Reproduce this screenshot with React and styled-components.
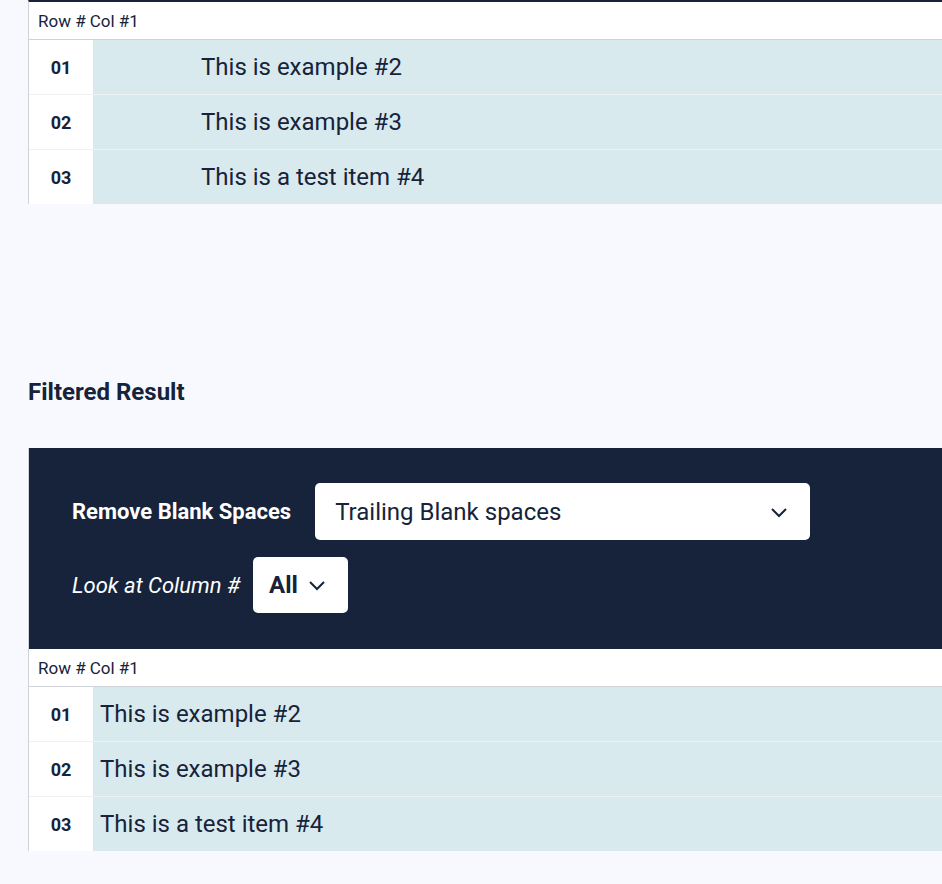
import styled, { createGlobalStyle } from "styled-components";

const Global = createGlobalStyle`
  body { margin: 0; background: #f7f9fe; font-family: Roboto, "Liberation Sans", sans-serif; color: #16233a; overflow: hidden; }
`;

const Page = styled.div`
  padding-left: 28px;
  width: 930px;
`;

const Table = styled.div`
  border-left: 1px solid #cfd3d8;
  border-top: ${(p) => (p.topBorder ? "2px solid #16233a" : "none")};
`;

const Header = styled.div`
  height: 37px;
  background: #fff;
  border-bottom: 1px solid #cfd3d8;
  display: flex;
  align-items: center;
  padding-left: 9px;
  font-size: 17px;
  gap: 4px;
`;

const Row = styled.div`
  display: flex;
  height: 54px;
  & + & { border-top: 1px solid #eef1f3; }
`;

const Num = styled.div`
  width: 64px;
  background: #fff;
  display: flex;
  align-items: center;
  justify-content: center;
  font-weight: 700;
  font-size: 18px;
`;

const Cell = styled.div`
  flex: 1;
  background: #d9eaee;
  display: flex;
  align-items: center;
  padding-left: ${(p) => p.indent}px;
  font-size: 24px;
`;

const Title = styled.h2`
  margin: 174px 0 42px;
  font-size: 24px;
  font-weight: 700;
`;

const Panel = styled.div`
  background: #16233a;
  padding: 35px 43px 36px;
  display: flex;
  flex-direction: column;
  gap: 17px;
  border-left: 1px solid #cfd3d8;
`;

const Line = styled.div`
  display: flex;
  align-items: center;
  gap: 24px;
`;

const Label = styled.span`
  color: #fff;
  font-size: 22px;
  font-weight: ${(p) => (p.italic ? 400 : 700)};
  font-style: ${(p) => (p.italic ? "italic" : "normal")};
`;

const Select = styled.div`
  background: #fff;
  border-radius: 5px;
  height: ${(p) => p.h}px;
  width: ${(p) => p.w}px;
  box-sizing: border-box;
  display: flex;
  align-items: center;
  justify-content: space-between;
  padding: 0 22px 0 ${(p) => p.pl}px;
  font-size: 24px;
  font-weight: ${(p) => (p.bold ? 700 : 400)};
  color: #16233a;
`;

const Chevron = () => (
  <svg width="18" height="12" viewBox="0 0 18 12" fill="none" stroke="#16233a" strokeWidth="2">
    <path d="M2 3l7 7 7-7" />
  </svg>
);

const items = ["This is example #2", "This is example #3", "This is a test item #4"];

function Grid({ indent, topBorder }) {
  return (
    <Table topBorder={topBorder}>
      <Header><span>Row #</span><span>Col #1</span></Header>
      {items.map((t, i) => (
        <Row key={i}>
          <Num>0{i + 1}</Num>
          <Cell indent={indent}>{t}</Cell>
        </Row>
      ))}
    </Table>
  );
}

export default function App() {
  return (
    <Page>
      <Global />
      <Grid indent={108} topBorder />
      <Title>Filtered Result</Title>
      <div>
        <Panel>
          <Line>
            <Label>Remove Blank Spaces</Label>
            <Select w={495} h={57} pl={20}>Trailing Blank spaces<Chevron /></Select>
          </Line>
          <Line style={{ gap: "13px" }}>
            <Label italic>Look at Column #</Label>
            <Select w={95} h={56} pl={16} bold>All<Chevron /></Select>
          </Line>
        </Panel>
        <Grid indent={7} />
      </div>
    </Page>
  );
}
